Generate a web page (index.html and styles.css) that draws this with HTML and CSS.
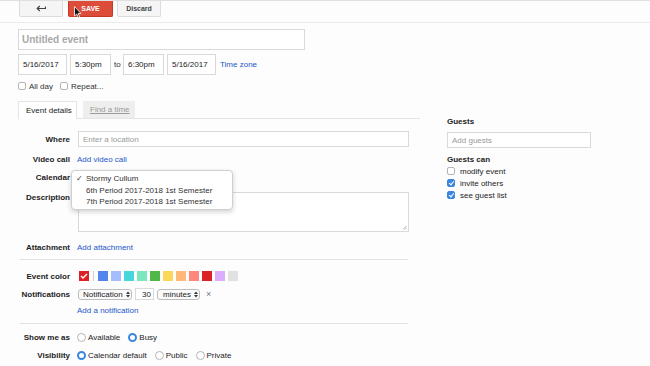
FILE: index.html
```html
<!DOCTYPE html>
<html>
  <head>
    <meta charset="UTF-8" />
    <title>Untitled event</title>
    <link rel="stylesheet" href="styles.css">
  </head>

  <body>
    <div class="toolbar">
      <button class="btn back">
        <svg width="10" height="7" viewBox="0 0 10 7">
          <path d="M9.5 1.5 V3.5 H1.5 M3.8 1 L1.2 3.5 L3.8 6" fill="none" stroke="#444" stroke-width="1.2" />
        </svg>
      </button>
      <button class="btn save">SAVE</button>
      <button class="btn discard">Discard</button>
    </div>
    <svg class="cursor" width="8" height="12" viewBox="0 0 8 12">
      <path d="M0.5 0.5 L0.5 10 L2.7 8 L4.3 11.5 L5.6 10.9 L4.1 7.5 L7 7.5 Z" fill="#111" stroke="#fff" stroke-width="0.8" />
    </svg>

    <div class="page">
      <div class="left">
        <div class="title-input">Untitled event</div>

        <div class="when">
          <span class="box date">5/16/2017</span>
          <span class="box time">5:30pm</span>
          <span class="to">to</span>
          <span class="box time">6:30pm</span>
          <span class="box date">5/16/2017</span>
          <a class="link">Time zone</a>
        </div>

        <div class="checks">
          <span class="cb"></span><span class="cb-text">All day</span>
          <span class="cb"></span><span class="cb-text">Repeat...</span>
        </div>

        <div class="tabs">
          <span class="tab active">Event details</span>
          <span class="tab inactive">Find a time</span>
        </div>

        <div class="form">
          <div class="row where">
            <span class="lbl">Where</span>
            <span class="box wide placeholder">Enter a location</span>
          </div>
          <div class="row video">
            <span class="lbl">Video call</span>
            <a class="link">Add video call</a>
          </div>
          <div class="row calendar">
            <span class="lbl">Calendar</span>
            <div class="popup">
              <div class="item"><span class="tick">✓</span>Stormy Cullum</div>
              <div class="item"><span class="tick"></span>6th Period 2017-2018 1st Semester</div>
              <div class="item"><span class="tick"></span>7th Period 2017-2018 1st Semester</div>
            </div>
          </div>
          <div class="row desc">
            <span class="lbl">Description</span>
            <span class="box area">
              <svg class="grip" width="5" height="5" viewBox="0 0 5 5">
                <path d="M1 4.5 L4.5 1 M3 4.5 L4.5 3" stroke="#999" stroke-width="0.8" />
              </svg>
            </span>
          </div>
          <div class="row attach">
            <span class="lbl">Attachment</span>
            <a class="link">Add attachment</a>
          </div>

          <div class="rule"></div>

          <div class="row colors">
            <span class="lbl">Event color</span>
            <span class="swatch current">
              <svg width="8" height="6" viewBox="0 0 8 6">
                <path d="M1 3 L3 5 L7 1" fill="none" stroke="#fff" stroke-width="1.4" />
              </svg>
            </span>
            <span class="divider"></span>
            <span class="swatch" style="background: #5484ed"></span>
            <span class="swatch" style="background: #a4bdfc"></span>
            <span class="swatch" style="background: #46d6db"></span>
            <span class="swatch" style="background: #7ae7bf"></span>
            <span class="swatch" style="background: #51b749"></span>
            <span class="swatch" style="background: #fbd75b"></span>
            <span class="swatch" style="background: #ffb878"></span>
            <span class="swatch" style="background: #ff887c"></span>
            <span class="swatch" style="background: #dc2127"></span>
            <span class="swatch" style="background: #dbadff"></span>
            <span class="swatch" style="background: #e1e1e1"></span>
          </div>
          <div class="row notif">
            <span class="lbl">Notifications</span>
            <span class="select kind">Notification<svg class="arrows" width="4" height="7" viewBox="0 0 4 7"><path d="M0 3 L2 0.5 L4 3 Z M0 4 L2 6.5 L4 4 Z" fill="#333" /></svg></span>
            <span class="box num">30</span>
            <span class="select unit">minutes<svg class="arrows" width="4" height="7" viewBox="0 0 4 7"><path d="M0 3 L2 0.5 L4 3 Z M0 4 L2 6.5 L4 4 Z" fill="#333" /></svg></span>
            <span class="remove">×</span>
          </div>
          <div class="row addnotif">
            <span class="lbl"></span>
            <a class="link">Add a notification</a>
          </div>

          <div class="rule second"></div>

          <div class="row show">
            <span class="lbl">Show me as</span>
            <span class="radio"></span><span class="opt">Available</span>
            <span class="radio on"></span><span class="opt">Busy</span>
          </div>
          <div class="row visibility">
            <span class="lbl">Visibility</span>
            <span class="radio on"></span><span class="opt">Calendar default</span>
            <span class="radio"></span><span class="opt">Public</span>
            <span class="radio"></span><span class="opt">Private</span>
          </div>
        </div>
      </div>

      <div class="right">
        <div class="heading">Guests</div>
        <div class="box guests placeholder">Add guests</div>
        <div class="heading can">Guests can</div>
        <div class="perm"><span class="cb"></span>modify event</div>
        <div class="perm"><span class="cb on"></span>invite others</div>
        <div class="perm"><span class="cb on"></span>see guest list</div>
      </div>
    </div>
  </body>
</html>
```

FILE: styles.css
```css
* {
  box-sizing: border-box;
}

html {
  font-family: "Liberation Sans", Arial, sans-serif;
}

body {
  margin: 0;
  font-size: 8px;
  color: #333;
  background: #fdfdfe;
  border-top: 1px solid #e0e0e0;
}

.toolbar {
  height: 22px;
  border-bottom: 1px solid #ebebeb;
  display: flex;
  align-items: flex-start;
  padding-left: 19px;
}

.btn {
  height: 16px;
  padding: 0;
  border: 1px solid #dcdcdc;
  border-top: none;
  border-radius: 0 0 2px 2px;
  background: #f5f5f5;
  font: bold 7px "Liberation Sans", Arial, sans-serif;
  color: #444;
  display: flex;
  align-items: center;
  justify-content: center;
}

.back {
  width: 44px;
}

.save {
  width: 45px;
  margin-left: 5px;
  background: #dd4b39;
  border-color: #c53727;
  color: #fff;
}

.discard {
  width: 44px;
  margin-left: 4px;
}

.cursor {
  position: absolute;
  left: 74px;
  top: 6px;
}

.page {
  display: grid;
  grid-template-columns: 447px 160px;
}

.left {
  padding-left: 18px;
}

.box {
  border: 1px solid #d9d9d9;
  background: #fff;
  display: flex;
  align-items: center;
  padding-left: 4px;
}

.placeholder {
  color: #999;
}

.link {
  color: #2456c8;
}

.title-input {
  margin-top: 6px;
  width: 287px;
  height: 21px;
  border: 1px solid #d9d9d9;
  background: #fff;
  padding-left: 3px;
  font-size: 10px;
  font-weight: bold;
  color: #a8a8a8;
  line-height: 19px;
}

.when {
  margin-top: 4px;
  height: 21px;
  display: flex;
  align-items: center;
}

.when .box {
  height: 21px;
  color: #222;
  margin-right: 3px;
}

.date {
  width: 49px;
}

.time {
  width: 41px;
}

.to {
  margin-right: 2px;
  width: 7px;
}

.when .link {
  margin-left: 1px;
}

.checks {
  margin-top: 5px;
  height: 12px;
  display: flex;
  align-items: center;
}

.cb {
  width: 8px;
  height: 8px;
  border: 1px solid #b5b5b5;
  border-radius: 2px;
  background: #fff;
  display: inline-block;
  position: relative;
}

.cb.on {
  background: #3b87e0;
  border-color: #3b87e0;
}

.cb.on::after {
  content: "";
  position: absolute;
  left: 2px;
  top: 0px;
  width: 2px;
  height: 4px;
  border: solid #fff;
  border-width: 0 1px 1px 0;
  transform: rotate(40deg);
}

.cb-text {
  margin-left: 3px;
  margin-right: 7px;
}

.tabs {
  margin-top: 9px;
  width: 402px;
  height: 18px;
  border-bottom: 1px solid #e4e4e4;
  display: flex;
  align-items: flex-end;
}

.tab {
  height: 17px;
  display: flex;
  align-items: center;
}

.active {
  width: 59px;
  padding-left: 7px;
  border: 1px solid #e4e4e4;
  border-bottom: none;
  background: #fff;
  color: #222;
  height: 18px;
  margin-bottom: -1px;
}

.inactive {
  width: 52px;
  margin-left: 6px;
  padding-left: 7px;
  background: #eeeeee;
  color: #9a9a9a;
  text-decoration: underline;
}

.form {
  margin-top: 12px;
}

.row {
  display: flex;
  align-items: center;
  height: 16px;
}

.lbl {
  width: 52px;
  margin-right: 8px;
  text-align: right;
  font-weight: bold;
  color: #222;
  flex-shrink: 0;
}

.wide {
  width: 331px;
  height: 16px;
}

.video {
  margin-top: 4px;
}

.video .link,
.attach .link,
.addnotif .link {
  margin-left: -1px;
}

.calendar {
  margin-top: 2px;
  position: relative;
}

.popup {
  position: absolute;
  left: 53px;
  top: 1px;
  width: 162px;
  height: 40px;
  padding-top: 2px;
  background: #fff;
  border: 1px solid #cfcfcf;
  border-radius: 4px;
  box-shadow: 0 2px 5px rgba(0, 0, 0, 0.18);
  color: #333;
  z-index: 2;
}

.item {
  height: 11.5px;
  line-height: 11.5px;
  display: flex;
}

.tick {
  width: 14px;
  padding-left: 4px;
}

.desc {
  margin-top: 7px;
  height: 40px;
  align-items: flex-start;
}

.desc .lbl {
  line-height: 11px;
}

.area {
  width: 331px;
  height: 40px;
  position: relative;
}

.grip {
  position: absolute;
  right: 1px;
  bottom: 1px;
}

.attach {
  margin-top: 7px;
}

.rule {
  margin: 4px 0 0 2px;
  width: 388px;
  height: 1px;
  background: #e2e2e2;
}

.colors {
  margin-top: 8px;
}

.swatch {
  width: 10px;
  height: 10px;
  margin-right: 3px;
  flex-shrink: 0;
}

.current {
  margin-left: 1px;
  margin-right: 4px;
  background: #dc2127;
  display: flex;
  align-items: center;
  justify-content: center;
}

.divider {
  width: 1px;
  height: 10px;
  background: #cfcfcf;
  margin-right: 4px;
}

.notif {
  margin-top: 2px;
}

.select {
  height: 11px;
  border: 1px solid #bdbdbd;
  border-radius: 3px;
  background: #fafafa;
  display: flex;
  align-items: center;
  padding-left: 4px;
  color: #222;
}

.arrows {
  margin-left: 3px;
}

.kind {
  width: 54px;
}

.num {
  width: 19px;
  height: 12px;
  margin-left: 3px;
  justify-content: flex-end;
  padding-right: 2px;
  color: #222;
}

.unit {
  width: 43px;
  margin-left: 3px;
  padding-left: 5px;
}

.remove {
  margin-left: 6px;
  font-size: 9px;
  color: #777;
}

.rule.second {
  margin-top: 5px;
}

.show {
  margin-top: 5px;
}

.visibility {
  margin-top: 2px;
}

.radio {
  width: 9px;
  height: 9px;
  border: 1px solid #b5b5b5;
  border-radius: 50%;
  background: #fff;
  flex-shrink: 0;
  margin-left: -1px;
}

.radio.on {
  border: 2.5px solid #3b87e0;
  background: #fff;
}

.opt {
  margin-left: 2px;
  margin-right: 9px;
  color: #222;
}

.right {
  padding-top: 93px;
}

.heading {
  height: 11px;
  line-height: 11px;
  font-weight: bold;
  color: #222;
}

.guests {
  margin-top: 5px;
  width: 144px;
  height: 16px;
}

.can {
  margin-top: 6px;
}

.perm {
  height: 12px;
  display: flex;
  align-items: center;
  color: #222;
}

.perm .cb {
  margin-right: 5px;
}
```
